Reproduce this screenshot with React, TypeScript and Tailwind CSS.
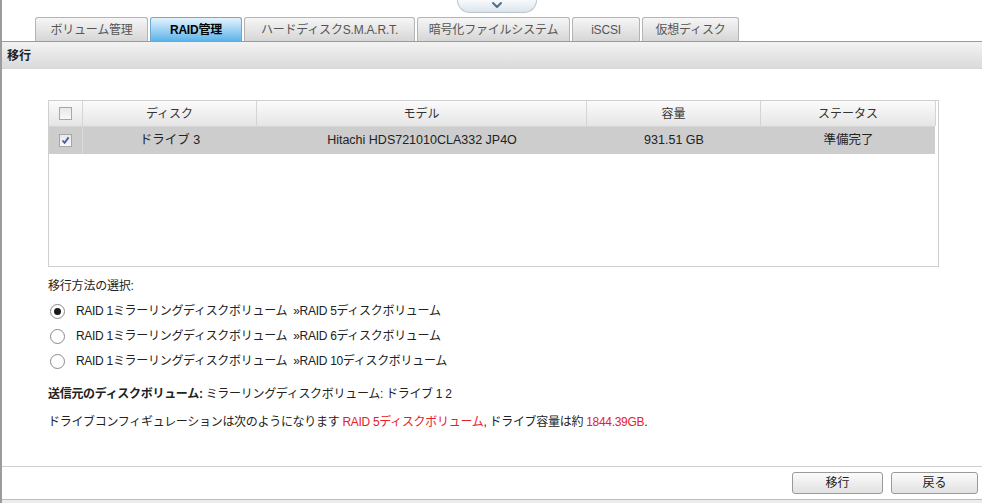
import { ChevronDown } from 'lucide-react'

const tabs = [
  { label: 'ボリューム管理', w: 'w-[113px]' },
  { label: 'RAID管理', w: 'w-[92px]', active: true },
  { label: 'ハードディスクS.M.A.R.T.', w: 'w-[171px]' },
  { label: '暗号化ファイルシステム', w: 'w-[153px]' },
  { label: 'iSCSI', w: 'w-[68px]' },
  { label: '仮想ディスク', w: 'w-[97px]' },
]

const options = [
  { label: 'RAID 1ミラーリングディスクボリューム  »RAID 5ディスクボリューム', checked: true },
  { label: 'RAID 1ミラーリングディスクボリューム  »RAID 6ディスクボリューム' },
  { label: 'RAID 1ミラーリングディスクボリューム  »RAID 10ディスクボリューム' },
]

function Checkbox({ checked }: { checked?: boolean }) {
  return (
    <div className="w-[13px] h-[13px] border border-[#a7a7a7] bg-gradient-to-b from-[#e8e8e8] to-[#f8f8f8] flex items-center justify-center">
      {checked && (
        <svg width="9" height="9" viewBox="0 0 9 9">
          <path d="M1.5 4.5 L3.6 6.8 L7.6 1.4" fill="none" stroke="#3a5ea8" strokeWidth="1.8" />
        </svg>
      )}
    </div>
  )
}

function Radio({ checked }: { checked?: boolean }) {
  return (
    <div className="w-[15px] h-[15px] rounded-full border border-[#8a8a8a] bg-white flex items-center justify-center">
      {checked && <div className="w-[7px] h-[7px] rounded-full bg-[#1a1a1a]" />}
    </div>
  )
}

export default function App() {
  return (
    <div className="w-[982px] h-[503px] overflow-hidden bg-white border-l-2 border-[#9c9c9c] flex flex-col font-['Liberation_Sans','Noto_Sans_CJK_JP',sans-serif] text-[#222] relative">
      {/* pull-down handle */}
      <div className="absolute left-[455px] top-0 w-[80px] h-[13px] rounded-b-[16px] border border-t-0 border-[#b9c4cc] bg-gradient-to-b from-[#f7fafc] to-[#dce4ea] flex items-center justify-center">
        <ChevronDown className="w-4 h-4 text-[#4e6f8c] -mt-[3px]" strokeWidth={3} />
      </div>

      {/* tabs */}
      <div className="mt-[17px] h-[25px] flex items-end gap-[2px] pl-[33px] border-b border-[#9a9a9a]">
        {tabs.map(t => (
          <div
            key={t.label}
            className={`${t.w} h-[24px] rounded-t-[3px] border border-b-0 flex items-center justify-center text-[12px] tracking-[-0.2px] ${
              t.active
                ? 'border-[#6fa9cf] bg-gradient-to-b from-[#e3f3fd] to-[#59b3ea] font-bold text-black'
                : 'border-[#b4b4b4] bg-gradient-to-b from-[#f6f6f6] to-[#d6d6d6] text-[#555]'
            }`}
          >
            {t.label}
          </div>
        ))}
      </div>

      {/* section header */}
      <div className="h-[27px] bg-gradient-to-b from-[#f3f3f3] to-[#d9d9d9] flex items-center pl-[5px] text-[12px] font-bold text-[#222]">
        移行
      </div>

      {/* content */}
      <div className="flex-1 pl-[46px] pr-[43px] pt-[31px]">
        <div className="h-[167px] border border-[#cfcfcf] pr-[3px]">
          <div className="grid grid-cols-[34px_174px_330px_174px_175px] h-[26px] bg-gradient-to-b from-[#fbfbfb] to-[#e5e5e5] border-b border-[#d4d4d4] text-[12px] text-[#333]">
            <div className="flex items-center justify-center border-r border-[#d4d4d4]">
              <Checkbox />
            </div>
            <div className="flex items-center justify-center border-r border-[#d4d4d4]">ディスク</div>
            <div className="flex items-center justify-center border-r border-[#d4d4d4]">モデル</div>
            <div className="flex items-center justify-center border-r border-[#d4d4d4]">容量</div>
            <div className="flex items-center justify-center border-r border-[#d4d4d4]">ステータス</div>
          </div>
          <div className="grid grid-cols-[34px_174px_330px_174px_175px] h-[27px] bg-[#cdcdcd] text-[12.5px] text-[#222]">
            <div className="flex items-center justify-center border-r border-[#dcdcdc]">
              <Checkbox checked />
            </div>
            <div className="flex items-center justify-center">ドライブ 3</div>
            <div className="flex items-center justify-center">Hitachi HDS721010CLA332 JP4O</div>
            <div className="flex items-center justify-center">931.51 GB</div>
            <div className="flex items-center justify-center">準備完了</div>
          </div>
        </div>

        <div className="mt-[9px] text-[12px] leading-[20px] tracking-[-0.2px]">移行方法の選択:</div>
        <div className="mt-[5px] flex flex-col gap-[5px]">
          {options.map(o => (
            <div key={o.label} className="flex items-center h-[20px] pl-[2px] gap-[11px] text-[12px] tracking-[-0.3px] whitespace-pre">
              <Radio checked={o.checked} />
              <span>{o.label}</span>
            </div>
          ))}
        </div>

        <div className="mt-[13px] text-[12px] leading-[20px] tracking-[-0.3px]">
          <span className="font-bold">送信元のディスクボリューム:</span> ミラーリングディスクボリューム: ドライブ 1 2
        </div>
        <div className="mt-[8px] text-[12px] leading-[20px] tracking-[-0.3px]">
          ドライブコンフィギュレーションは次のようになります <span className="text-[#e8202a]">RAID 5ディスクボリューム</span>, ドライブ容量は約{' '}
          <span className="text-[#e8202a]">1844.39GB</span>.
        </div>
      </div>

      {/* footer */}
      <div className="h-[33px] border-t border-[#cfcfcf] flex items-center justify-end gap-[8px] pr-[4px]">
        <button className="w-[91px] h-[22px] rounded-[3px] border border-[#9a9a9a] bg-gradient-to-b from-[#fbfbfb] to-[#e1e1e1] text-[12px] text-[#222]">
          移行
        </button>
        <button className="w-[87px] h-[22px] rounded-[3px] border border-[#9a9a9a] bg-gradient-to-b from-[#fbfbfb] to-[#e1e1e1] text-[12px] text-[#222]">
          戻る
        </button>
      </div>
      <div className="h-[4px] border-t border-[#bdbdbd] bg-[#ececec]" />
    </div>
  )
}
